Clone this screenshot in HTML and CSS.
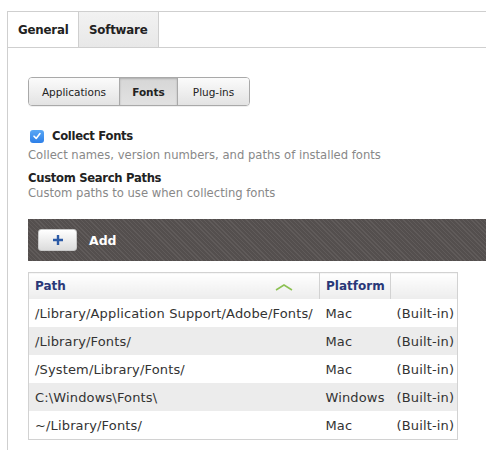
FILE: index.html
```html
<!DOCTYPE html>
<html>
<head>
    <title>Software - Fonts</title>
    <link rel="stylesheet" href="styles.css">
</head>
<body>

<div class="panel">
    <div class="tabs">
        <div class="tab active">General</div>
        <div class="tab">Software</div>
    </div>

    <div class="content">
        <div class="segmented">
            <button type="button" class="seg">Applications</button>
            <button type="button" class="seg selected">Fonts</button>
            <button type="button" class="seg">Plug-ins</button>
        </div>

        <label class="check-row">
            <span class="checkbox">
                <svg width="10" height="10" viewBox="0 0 10 10"><path d="M2 5.2 L4.2 7.4 L8 2.6" fill="none" stroke="#fff" stroke-width="1.6" stroke-linecap="round" stroke-linejoin="round"/></svg>
            </span>
            <span class="field-title">Collect Fonts</span>
        </label>
        <p class="hint first">Collect names, version numbers, and paths of installed fonts</p>

        <div class="field-title block">Custom Search Paths</div>
        <p class="hint">Custom paths to use when collecting fonts</p>

        <div class="toolbar">
            <button type="button" class="add-button">
                <svg width="12" height="12" viewBox="0 0 12 12"><path d="M6 1 V11 M1 6 H11" stroke="#2c5aa6" stroke-width="2.4"/></svg>
            </button>
            <span class="add-label">Add</span>
        </div>

        <table class="paths">
            <thead>
                <tr>
                    <th class="col-path">Path <span class="sort">
                        <svg width="18" height="8" viewBox="0 0 18 8"><path d="M1 7 L9 2 L17 7" fill="none" stroke="#8cc152" stroke-width="1.5"/></svg>
                    </span></th>
                    <th class="col-platform">Platform</th>
                    <th class="col-source"></th>
                </tr>
            </thead>
            <tbody>
                <tr><td>/Library/Application Support/Adobe/Fonts/</td><td>Mac</td><td>(Built-in)</td></tr>
                <tr><td>/Library/Fonts/</td><td>Mac</td><td>(Built-in)</td></tr>
                <tr><td>/System/Library/Fonts/</td><td>Mac</td><td>(Built-in)</td></tr>
                <tr><td>C:\Windows\Fonts\</td><td>Windows</td><td>(Built-in)</td></tr>
                <tr><td>~/Library/Fonts/</td><td>Mac</td><td>(Built-in)</td></tr>
            </tbody>
        </table>
    </div>
</div>

</body>
</html>
```

FILE: styles.css
```css
body {
    margin: 0;
    background-color: #fff;
    font-family: "DejaVu Sans", Verdana, sans-serif;
    color: #333;
}
.panel {
    margin: 11px 0 0 7px;
    border-top: 1px solid #cfcfcf;
    border-left: 1px solid #cfcfcf;
    min-height: 440px;
}
.tabs {
    display: flex;
    height: 35px;
    border-bottom: 1px solid #cfcfcf;
}
.tab {
    font-size: 11.8px;
    font-weight: bold;
    letter-spacing: -0.2px;
    color: #222;
    line-height: 36px;
    padding: 0 10px;
}
.tab.active {
    width: 50px;
}
.tab + .tab {
    width: 59px;
    border-left: 1px solid #cfcfcf;
    border-right: 1px solid #cfcfcf;
    background: linear-gradient(#f2f2f2, #e8e8e8);
}
.content {
    padding: 29px 0 0 20px;
}
.segmented {
    display: inline-flex;
    height: 27px;
    border: 1px solid #a9a9a9;
    border-radius: 4px;
    overflow: hidden;
    box-shadow: 0 1px 0 rgba(0, 0, 0, 0.06);
}
.seg {
    font-family: "DejaVu Sans", Verdana, sans-serif;
    font-size: 10.5px;
    color: #222;
    border: none;
    background: linear-gradient(#fbfbfb, #e3e3e3);
    padding: 0;
    margin: 0;
}
.seg:nth-child(1) { width: 90px; }
.seg:nth-child(2) { width: 59px; border-left: 1px solid #a9a9a9; border-right: 1px solid #a9a9a9; }
.seg:nth-child(3) { width: 71px; }
.seg.selected {
    font-weight: bold;
    background: linear-gradient(#d6d6d6, #e2e2e2);
    box-shadow: inset 0 1px 2px rgba(0, 0, 0, 0.2);
}
.check-row {
    display: flex;
    align-items: center;
    margin-top: 22px;
    height: 16px;
}
.checkbox {
    display: inline-flex;
    align-items: center;
    justify-content: center;
    width: 14px;
    height: 13px;
    margin: 0 8px 0 2px;
    border-radius: 3px;
    background: linear-gradient(#5aa8f5, #2d7fe8);
}
.field-title {
    font-size: 11.6px;
    font-weight: bold;
    letter-spacing: -0.3px;
    line-height: 14px;
    color: #222;
}
.field-title.block {
    margin-top: 8px;
}
.hint {
    font-size: 11.6px;
    line-height: 16px;
    color: #888;
    margin: 0;
}
.hint.first {
    margin-top: 3px;
}
.toolbar {
    display: flex;
    align-items: center;
    margin-top: 18px;
    height: 42px;
    padding-left: 10px;
    background-color: #585352;
    background-image: repeating-linear-gradient(45deg, #605b5a 0, #605b5a 1px, #544f4e 1px, #544f4e 3px);
}
.add-button {
    display: flex;
    align-items: center;
    justify-content: center;
    width: 39px;
    height: 22px;
    padding: 0;
    border: 1px solid #c8c8c8;
    border-radius: 3px;
    background: linear-gradient(#ffffff, #dcdcdc);
}
.add-label {
    color: #fff;
    font-weight: bold;
    font-size: 12.5px;
    margin-left: 12px;
}
.paths {
    margin-top: 11px;
    width: 430px;
    table-layout: fixed;
    border-collapse: collapse;
    border: 1px solid #d2d2d2;
    font-size: 13px;
    letter-spacing: 0.15px;
}
.paths th {
    height: 26px;
    text-align: left;
    padding: 0 6px;
    font-size: 12px;
    letter-spacing: 0;
    color: #2a3878;
    font-weight: bold;
    background: linear-gradient(#ffffff, #ececec);
    border-left: 1px solid #d2d2d2;
    position: relative;
}
.col-path { width: 278px; }
.col-platform { width: 58px; }
.sort {
    position: absolute;
    left: 246px;
    top: 7px;
}
.paths td {
    height: 28px;
    padding: 0 6px;
    color: #333;
    white-space: nowrap;
}
.paths tbody tr:nth-child(even) td {
    background-color: #ececec;
}
```
